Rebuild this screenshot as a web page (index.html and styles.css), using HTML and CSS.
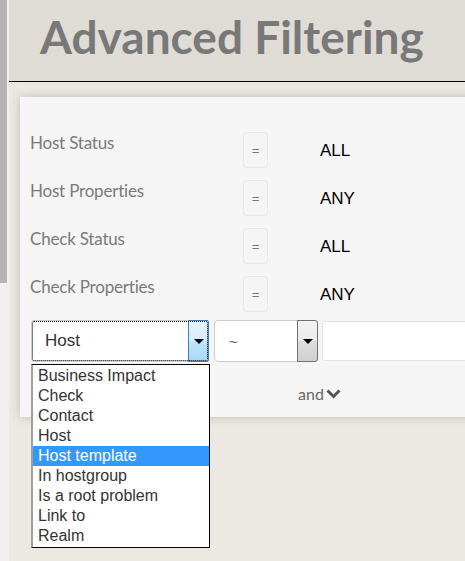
FILE: index.html
```html
<!DOCTYPE html>
<html>
<head>
<meta charset="utf-8">
<link rel="stylesheet" href="styles.css">
</head>
<body>
<div class="page">
  <div class="rail"></div>
  <div class="main">
    <header class="header">
      <h1 class="title">Advanced Filtering</h1>
    </header>
    <section class="content">
      <div class="panel">
        <div class="grid">
          <div class="label">Host Status</div>
          <div class="eq">=</div>
          <div class="value">ALL</div>

          <div class="label">Host Properties</div>
          <div class="eq">=</div>
          <div class="value">ANY</div>

          <div class="label">Check Status</div>
          <div class="eq">=</div>
          <div class="value">ALL</div>

          <div class="label">Check Properties</div>
          <div class="eq">=</div>
          <div class="value">ANY</div>
        </div>
        <div class="filter-row">
          <div class="select select-field">
            <span class="select-text">Host</span>
            <span class="select-btn btn-blue"><span class="arrow"></span></span>
            <ul class="listbox">
              <li>Business Impact</li>
              <li>Check</li>
              <li>Contact</li>
              <li>Host</li>
              <li class="selected">Host template</li>
              <li>In hostgroup</li>
              <li>Is a root problem</li>
              <li>Link to</li>
              <li>Realm</li>
            </ul>
          </div>
          <div class="select select-op">
            <span class="select-text op-text">~</span>
            <span class="select-btn btn-gray"><span class="arrow"></span></span>
          </div>
          <div class="text-input"></div>
        </div>
        <div class="and-row">
          <span class="and">and</span>
          <svg class="chev" width="15" height="10" viewBox="0 0 15 10"><path d="M1.5 1.5 L7.5 7.5 L13.5 1.5" fill="none" stroke="#555" stroke-width="3"/></svg>
        </div>
      </div>
    </section>
  </div>
</div>
</body>
</html>
```

FILE: styles.css
```css
html, body {
  margin: 0;
  padding: 0;
  height: 100%;
  overflow: hidden;
}
body {
  background: #f0f0f0;
  font-family: Lato, "Liberation Sans", sans-serif;
}
.page {
  display: flex;
  align-items: flex-start;
  height: 561px;
}
.rail {
  flex: 0 0 7px;
  align-self: flex-start;
  height: 283px;
  background: #b4b4b4;
  margin-right: 2px;
}
.main {
  flex: 1;
  align-self: stretch;
  display: flex;
  flex-direction: column;
  overflow: hidden;
}
.header {
  background: #dfdcd5;
  border-bottom: 1px solid #000;
  box-sizing: border-box;
  height: 82px;
}
.title {
  margin: 0;
  padding-left: 31px;
  padding-top: 9px;
  font-family: Lato, sans-serif;
  font-weight: bold;
  font-size: 46px;
  line-height: 56px;
  color: #787878;
}
.content {
  flex: 1;
  background: linear-gradient(#ebe8e1, #ece9e2 40px, #ece9e2);
  padding-top: 15px;
  padding-left: 11px;
}
.panel {
  background: #f5f5f5;
  width: 470px;
  box-sizing: border-box;
  padding: 35px 0 0 10px;
  height: 320px;
  box-shadow: 0 0 10px rgba(0,0,0,0.18);
}
.grid {
  display: grid;
  grid-template-columns: 213px 25px auto;
  grid-auto-rows: 36px;
  row-gap: 12px;
}
.label {
  font-size: 17px;
  line-height: 20px;
  color: #7a7a7a;
  padding-top: 1px;
  white-space: nowrap;
  letter-spacing: -0.2px;
}
.eq {
  border: 1px solid #e6e6e6;
  border-radius: 4px;
  box-sizing: border-box;
  display: flex;
  align-items: center;
  justify-content: center;
  font-family: "Liberation Sans", sans-serif;
  font-size: 13px;
  color: #777;
}
.value {
  font-family: "Liberation Sans", sans-serif;
  font-size: 17px;
  color: #000;
  display: flex;
  align-items: center;
  padding-left: 52px;
  padding-top: 1px;
}
.filter-row {
  display: flex;
  margin-top: 8px;
  margin-left: 1px;
  height: 42px;
  align-items: flex-start;
}
.select {
  position: relative;
  display: flex;
  flex-shrink: 0;
  box-sizing: border-box;
  background: #fff;
  height: 42px;
}
.select-field {
  width: 178px;
  border: 1px solid #ccc;
  border-radius: 3px;
  outline: 1px dotted #000;
  outline-offset: -2px;
}
.select-op {
  width: 104px;
  margin-left: 5px;
  border: 1px solid #ccc;
  border-radius: 4px;
}
.select-text {
  flex: 1;
  font-family: "Liberation Sans", sans-serif;
  font-size: 17px;
  color: #333;
  padding-left: 13px;
  display: flex;
  align-items: center;
}
.op-text {
  font-size: 15px;
  color: #555;
  padding-left: 14px;
}
.select-btn {
  box-sizing: border-box;
  display: flex;
  align-items: center;
  justify-content: center;
}
.btn-blue {
  border: 1px solid #3c7fb1;
  border-radius: 0 2px 2px 0;
  background: linear-gradient(#e8f4fc, #d8ecfa 50%, #bee6fd 51%, #a8d8f5);
  margin: -1px -1px -1px 0;
  width: 21px;
}
.btn-gray {
  border: 1px solid #707070;
  border-radius: 0 3px 3px 0;
  background: linear-gradient(#f2f2f2, #ebebeb 50%, #dddddd 51%, #cfcfcf);
  margin: -1px -1px -1px 0;
  width: 21px;
}
.arrow {
  width: 0;
  height: 0;
  border-left: 5px solid transparent;
  border-right: 5px solid transparent;
  border-top: 5px solid #000;
}
.text-input {
  flex-shrink: 0;
  margin-left: 4px;
  margin-top: 1px;
  width: 200px;
  height: 40px;
  box-sizing: border-box;
  background: #fff;
  border: 1px solid #dde3e8;
  border-radius: 3px;
}
.listbox {
  position: absolute;
  left: -1px;
  top: 43px;
  width: 179px;
  margin: 0;
  padding: 1px 0;
  list-style: none;
  background: #fff;
  border: 1px solid #000;
  border-left: 2px solid #a0a0a0;
  box-sizing: border-box;
  z-index: 2;
}
.listbox li {
  font-family: "Liberation Sans", sans-serif;
  font-size: 16px;
  line-height: 20px;
  height: 20px;
  padding-left: 5px;
  color: #333;
}
.listbox li.selected {
  background: #3399ff;
  color: #fff;
}
.and-row {
  display: flex;
  align-items: center;
  margin-top: 22px;
  margin-left: 268px;
  gap: 2px;
}
.and {
  font-size: 16px;
  color: #666;
}
.chev {
  margin-top: 1px;
}
```
